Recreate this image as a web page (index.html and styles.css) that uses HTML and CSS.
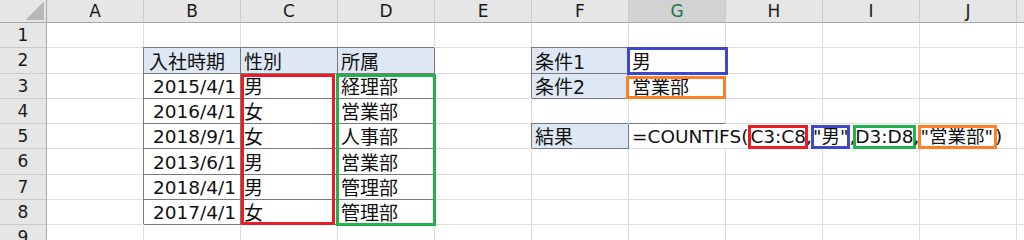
FILE: index.html
```html
<!DOCTYPE html>
<html lang="ja">
<head>
<meta charset="utf-8">
<title>COUNTIFS</title>
<link rel="stylesheet" href="styles.css">
</head>
<body>
<div class="wrap">
<div class="sheet">
  <!-- header row -->
  <div class="corner"><div class="tri"></div></div>
  <div class="ch">A</div><div class="ch">B</div><div class="ch">C</div><div class="ch">D</div><div class="ch">E</div>
  <div class="ch">F</div><div class="ch sel">G</div><div class="ch">H</div><div class="ch">I</div><div class="ch">J</div><div class="ch"></div>

  <!-- row 1 -->
  <div class="rh">1</div>
  <div class="c"></div><div class="c"></div><div class="c"></div><div class="c"></div><div class="c"></div>
  <div class="c"></div><div class="c"></div><div class="c"></div><div class="c"></div><div class="c"></div><div class="c"></div>

  <!-- row 2 -->
  <div class="rh">2</div>
  <div class="c"></div>
  <div class="c th tb first">入社時期</div><div class="c th tb">性別</div><div class="c th tb">所属</div>
  <div class="c"></div>
  <div class="c th tb">条件1</div><div class="c">男</div>
  <div class="c"></div><div class="c"></div><div class="c"></div><div class="c"></div>

  <!-- row 3 -->
  <div class="rh">3</div>
  <div class="c"></div>
  <div class="c tb num">2015/4/1</div><div class="c tb">男</div><div class="c tb">経理部</div>
  <div class="c"></div>
  <div class="c th tb">条件2</div><div class="c">営業部</div>
  <div class="c"></div><div class="c"></div><div class="c"></div><div class="c"></div>

  <!-- row 4 -->
  <div class="rh">4</div>
  <div class="c"></div>
  <div class="c tb num">2016/4/1</div><div class="c tb">女</div><div class="c tb">営業部</div>
  <div class="c"></div><div class="c"></div><div class="c bb"></div>
  <div class="c"></div><div class="c"></div><div class="c"></div><div class="c"></div>

  <!-- row 5 -->
  <div class="rh">5</div>
  <div class="c"></div>
  <div class="c tb num">2018/9/1</div><div class="c tb">女</div><div class="c tb">人事部</div>
  <div class="c"></div>
  <div class="c th tb">結果</div>
  <div class="c formula">=COUNTIFS(<span class="hl hl-red">C3:C8</span>,<span class="hl hl-blue">"男"</span>,<span class="hl hl-green">D3:D8</span>,<span class="hl hl-orange">"営業部"</span>)</div>
  <div class="c"></div>

  <!-- row 6 -->
  <div class="rh">6</div>
  <div class="c"></div>
  <div class="c tb num">2013/6/1</div><div class="c tb">男</div><div class="c tb">営業部</div>
  <div class="c"></div><div class="c"></div><div class="c"></div>
  <div class="c"></div><div class="c"></div><div class="c"></div><div class="c"></div>

  <!-- row 7 -->
  <div class="rh">7</div>
  <div class="c"></div>
  <div class="c tb num">2018/4/1</div><div class="c tb">男</div><div class="c tb">管理部</div>
  <div class="c"></div><div class="c"></div><div class="c"></div>
  <div class="c"></div><div class="c"></div><div class="c"></div><div class="c"></div>

  <!-- row 8 -->
  <div class="rh">8</div>
  <div class="c"></div>
  <div class="c tb num">2017/4/1</div><div class="c tb">女</div><div class="c tb">管理部</div>
  <div class="c"></div><div class="c"></div><div class="c"></div>
  <div class="c"></div><div class="c"></div><div class="c"></div><div class="c"></div>

  <!-- row 9 -->
  <div class="rh">9</div>
  <div class="c"></div><div class="c"></div><div class="c"></div><div class="c"></div><div class="c"></div>
  <div class="c"></div><div class="c"></div><div class="c"></div><div class="c"></div><div class="c"></div><div class="c"></div>
</div>

<!-- highlight frames drawn over the cells -->
<div class="overlay">
  <div class="frame frame-red"></div>
  <div class="frame frame-green"></div>
  <div class="frame frame-blue"></div>
  <div class="frame frame-orange"></div>
</div>
</div>
</body>
</html>
```
FILE: styles.css
```css
html, body {
  margin: 0;
  padding: 0;
  background: #ffffff;
}

body {
  width: 1024px;
  height: 240px;
  overflow: hidden;
  font-family: "DejaVu Sans", "Noto Sans CJK JP", sans-serif;
  color: #111111;
}

.wrap {
  position: relative;
  width: 1114px;
}

.sheet,
.overlay {
  display: grid;
  grid-template-columns: 47px repeat(10, 97px) 97px;
  grid-template-rows: 23px repeat(9, 25.3px);
  width: 1114px;
}

.overlay {
  position: absolute;
  top: 0;
  left: 0;
  pointer-events: none;
}

.corner {
  background: #e6e6e6;
  border-right: 1px solid #a8a8a8;
  border-bottom: 1px solid #a8a8a8;
  display: flex;
  justify-content: flex-end;
  align-items: flex-end;
  padding: 0 2px 2px 0;
  box-sizing: border-box;
}

.tri {
  width: 19px;
  height: 19px;
  background: linear-gradient(to bottom right, transparent 50%, #b9b9b9 50%);
}

.ch {
  background: #e6e6e6;
  border-right: 1px solid #cbcbcb;
  border-bottom: 1px solid #a8a8a8;
  box-sizing: border-box;
  font-size: 17px;
  line-height: 22px;
  text-align: center;
  color: #1a1a1a;
}

.ch.sel {
  background: #d2d2d2;
  color: #217346;
}

.rh {
  background: #e6e6e6;
  border-right: 1px solid #a8a8a8;
  border-bottom: 1px solid #cbcbcb;
  box-sizing: border-box;
  font-size: 17px;
  text-align: center;
  line-height: 24px;
  color: #1a1a1a;
}

.c {
  border-right: 1px solid #dcdcdc;
  border-bottom: 1px solid #dcdcdc;
  box-sizing: border-box;
  font-size: 19px;
  line-height: 20px;
  display: flex;
  align-items: flex-end;
  padding: 0 3px 1px 3px;
  white-space: nowrap;
  min-width: 0;
}

.tb {
  border-right-color: #7a7a7a;
  border-bottom-color: #7a7a7a;
  box-shadow: -1px -1px 0 #7a7a7a;
}

.bb {
  border-bottom-color: #7a7a7a;
}

.th {
  background: #dde8f4;
}

.first {
  padding-left: 5px;
}

.num {
  justify-content: flex-end;
  font-size: 18.5px;
  padding-right: 4px;
}

.formula {
  grid-column: 8 / span 4;
  font-size: 18.5px;
  border-right-color: #dcdcdc;
}

.hl {
  padding: 0;
  outline-offset: -1px;
  outline-width: 3px;
  outline-style: solid;
}

.hl-red { outline-color: #ed1c24; margin-left: 2px; }
.hl-blue { outline-color: #3f48cc; margin: 0 1px; }
.hl-green { outline-color: #22b14c; }
.hl-orange { outline-color: #ff7f27; margin-left: 1px; padding-right: 2px; }

.frame {
  border: 3px solid;
  box-sizing: border-box;
}

.frame-red {
  grid-column: 4;
  grid-row: 4 / 10;
  border-color: #ed1c24;
  margin: 0 3px 0 0;
}

.frame-green {
  grid-column: 5;
  grid-row: 4 / 10;
  border-color: #22b14c;
  margin: 0 -1px -1px -2px;
}

.frame-blue {
  grid-column: 8;
  grid-row: 3;
  border-color: #3f48cc;
  margin: -1px -2px -1.5px -2px;
}

.frame-orange {
  grid-column: 8;
  grid-row: 4;
  border-color: #ff7f27;
  margin: 2.5px 0 -0.5px -3px;
}
```
